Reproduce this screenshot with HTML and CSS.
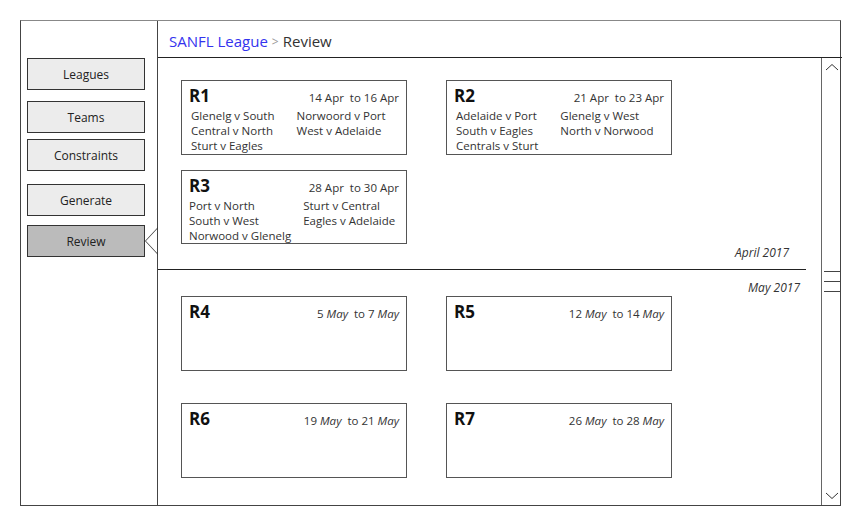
FILE: index.html
```html
<!DOCTYPE html>
<html lang="en">
<head>
    <meta charset="UTF-8">
    <meta name="viewport" content="width=device-width, initial-scale=1.0">
    <title>SANFL League - Review</title>
    <link rel="stylesheet" href="styles.css">
</head>
<body>
    <div class="frame">
        <div class="sidebar">
            <button class="nav-btn">Leagues</button>
            <button class="nav-btn">Teams</button>
            <button class="nav-btn">Constraints</button>
            <button class="nav-btn">Generate</button>
            <button class="nav-btn active">Review</button>
        </div>

        <div class="main">
            <div class="header">
                <a class="crumb-link">SANFL League</a>
                <span class="crumb-sep">&gt;</span>
                <span class="crumb-current">Review</span>
            </div>

            <div class="body">
                <div class="content">
                    <!-- April -->
                    <div class="month month-april">
                        <div class="rounds">
                            <div class="round">
                                <div class="round-head">
                                    <span class="round-name">R1</span>
                                    <span class="round-dates">14 Apr&nbsp; to 16 Apr</span>
                                </div>
                                <div class="matches">
                                    <span>Glenelg v South</span><span>Norwoord v Port</span>
                                    <span>Central v North</span><span>West v Adelaide</span>
                                    <span>Sturt v Eagles</span>
                                </div>
                            </div>
                            <div class="round">
                                <div class="round-head">
                                    <span class="round-name">R2</span>
                                    <span class="round-dates">21 Apr&nbsp; to 23 Apr</span>
                                </div>
                                <div class="matches">
                                    <span>Adelaide v Port</span><span>Glenelg v West</span>
                                    <span>South v Eagles</span><span>North v Norwood</span>
                                    <span>Centrals v Sturt</span>
                                </div>
                            </div>
                            <div class="round">
                                <div class="round-head">
                                    <span class="round-name">R3</span>
                                    <span class="round-dates">28 Apr&nbsp; to 30 Apr</span>
                                </div>
                                <div class="matches tight">
                                    <span>Port v North</span><span>Sturt v Central</span>
                                    <span>South v West</span><span>Eagles v Adelaide</span>
                                    <span>Norwood v Glenelg</span>
                                </div>
                            </div>
                        </div>
                        <div class="month-label">April 2017</div>
                    </div>

                    <!-- May -->
                    <div class="month month-may">
                        <div class="month-label">May 2017</div>
                        <div class="rounds">
                            <div class="round">
                                <div class="round-head">
                                    <span class="round-name">R4</span>
                                    <span class="round-dates">5 <i>May</i>&nbsp; to 7 <i>May</i></span>
                                </div>
                            </div>
                            <div class="round">
                                <div class="round-head">
                                    <span class="round-name">R5</span>
                                    <span class="round-dates">12 <i>May</i>&nbsp; to 14 <i>May</i></span>
                                </div>
                            </div>
                            <div class="round">
                                <div class="round-head">
                                    <span class="round-name">R6</span>
                                    <span class="round-dates">19 <i>May</i>&nbsp; to 21 <i>May</i></span>
                                </div>
                            </div>
                            <div class="round">
                                <div class="round-head">
                                    <span class="round-name">R7</span>
                                    <span class="round-dates">26 <i>May</i>&nbsp; to 28 <i>May</i></span>
                                </div>
                            </div>
                        </div>
                    </div>
                </div>

                <div class="scrollbar">
                    <svg class="arrow" width="14" height="8" viewBox="0 0 14 8">
                        <path d="M1 7 L7 1.5 L13 7" fill="none" stroke="#333" stroke-width="1"/>
                    </svg>
                    <div class="thumb">
                        <span></span><span></span><span></span>
                    </div>
                    <svg class="arrow" width="14" height="8" viewBox="0 0 14 8">
                        <path d="M1 1 L7 6.5 L13 1" fill="none" stroke="#333" stroke-width="1"/>
                    </svg>
                </div>
            </div>
        </div>
    </div>
</body>
</html>
```

FILE: styles.css
```css
body {
    margin: 0;
    padding: 20px 0 0 20px;
    font-family: "Open Sans", "DejaVu Sans", sans-serif;
    color: #222;
    background-color: #fff;
}

.frame {
    display: grid;
    grid-template-columns: 137px 684px;
    width: 821px;
    height: 486px;
    border: 1px solid #444;
    border-top-color: #888;
    box-sizing: border-box;
}

/* Sidebar */
.sidebar {
    display: flex;
    flex-direction: column;
    padding: 37px 0 0 6px;
    border-right: 1px solid #444;
}

.nav-btn {
    position: relative;
    width: 118px;
    height: 32px;
    margin-bottom: 9px;
    font-family: inherit;
    font-size: 12px;
    color: #222;
    background-color: #ececec;
    border: 1px solid #333;
    border-radius: 0;
    padding: 0;
}

.nav-btn:first-child {
    margin-bottom: 11px;
}

.nav-btn:nth-child(2) {
    margin-bottom: 6px;
}

.nav-btn:nth-child(3) {
    margin-bottom: 13px;
}

.nav-btn.active {
    background-color: #bbb;
}

/* pointer from the active item to the sidebar edge */
.nav-btn.active::after {
    content: "";
    position: absolute;
    right: -14px;
    top: 1px;
    width: 13px;
    height: 28px;
    clip-path: polygon(100% 0, 0 50%, 100% 100%, 100% 96%, 7% 50%, 100% 4%);
    background-color: #333;
}

/* Main */
.main {
    display: flex;
    flex-direction: column;
    min-width: 0;
}

.header {
    height: 37px;
    border-bottom: 1px solid #222;
    display: flex;
    align-items: center;
    gap: 4px;
    padding: 4px 0 0 11px;
    box-sizing: border-box;
    font-size: 15px;
}

.crumb-link {
    color: #3333ee;
}

.crumb-sep {
    color: #999;
    font-size: 12px;
}

.crumb-current {
    color: #333;
}

.body {
    flex: 1;
    display: flex;
    min-height: 0;
}

.content {
    flex: 1;
    overflow: hidden;
}

.month-april {
    padding: 22px 15px 0 23px;
    border-bottom: 1px solid #222;
    margin-right: 15px;
}

.month-may {
    padding: 10px 0 0 23px;
}

.month-label {
    font-size: 12px;
    font-style: italic;
    text-align: right;
    color: #333;
    line-height: 16px;
}

.month-april .month-label {
    padding: 1px 2px 8px 0;
}

.month-may .month-label {
    padding-right: 21px;
}

.rounds {
    display: grid;
    grid-template-columns: 226px 226px;
    column-gap: 39px;
    row-gap: 15px;
}

.month-may .rounds {
    row-gap: 32px;
}

.round {
    min-height: 75px;
    border: 1px solid #555;
    padding: 3px 7px 0 7px;
    box-sizing: border-box;
}

.month-april .round:nth-child(3) {
    min-height: 73px;
}

.round-head {
    display: flex;
    justify-content: space-between;
    align-items: baseline;
    height: 24px;
    white-space: nowrap;
}

.round-name {
    font-size: 17px;
    font-weight: bold;
    color: #111;
}

.round-dates {
    font-size: 11.5px;
    color: #333;
}

.matches {
    display: grid;
    grid-template-columns: auto auto;
    justify-content: start;
    column-gap: 22px;
    padding-left: 2px;
    font-size: 11.5px;
    line-height: 15px;
    color: #333;
    white-space: nowrap;
}

.matches.tight {
    padding-left: 0;
    column-gap: 12px;
}

/* Scrollbar */
.scrollbar {
    width: 21px;
    border-left: 1px solid #666;
    display: flex;
    flex-direction: column;
    justify-content: space-between;
    align-items: center;
    padding: 5px 0 5px;
    box-sizing: border-box;
}

.thumb {
    display: flex;
    flex-direction: column;
    gap: 9px;
    width: 16px;
}

.thumb span {
    display: block;
    height: 1px;
    background-color: #444;
}
```
